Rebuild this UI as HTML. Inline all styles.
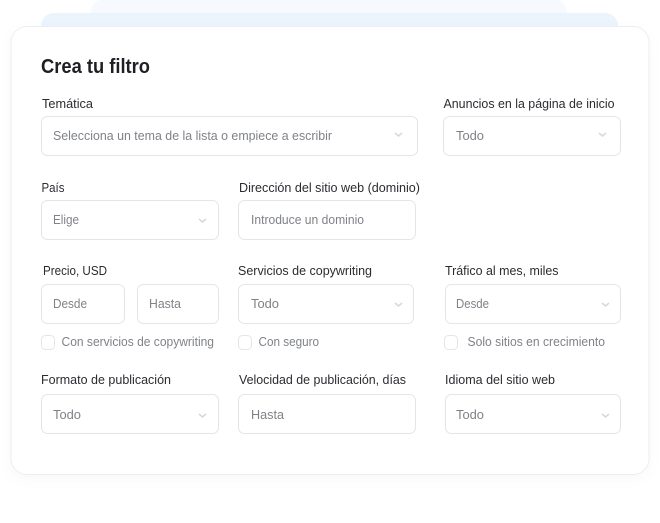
<!DOCTYPE html>
<html lang="es">
<head>
<meta charset="utf-8">
<title>Crea tu filtro</title>
<style>
html,body{margin:0;padding:0;width:660px;height:523px;overflow:hidden;background:#fff}
svg{display:block;font-family:"Liberation Sans",Arial,sans-serif;filter:blur(0.3px)}
.l{font-size:13px;fill:#2a2c30}
.v{font-size:13px;fill:#7f8287}
.b{fill:#fff;stroke:#e4e5e8;stroke-width:1}
.c{fill:none;stroke:#d6d8da;stroke-width:1.5}
</style>
</head>
<body>
<svg width="660" height="523" viewBox="0 0 660 523" xmlns="http://www.w3.org/2000/svg">
<defs>
<filter id="s" x="-5%" y="-5%" width="110%" height="112%">
<feDropShadow dx="0" dy="4" stdDeviation="5" flood-color="#8a9ab5" flood-opacity="0.07"/>
</filter>
</defs>
<rect x="91" y="-1" width="476" height="50" rx="13" fill="#f6faff"/>
<rect x="41" y="13" width="577" height="40" rx="13" fill="#ebf3fd"/>
<rect x="11" y="26.5" width="638" height="448" rx="16" fill="#fff" stroke="#eceef1" stroke-width="1" filter="url(#s)"/>

<text x="41" y="73" font-size="20" font-weight="700" fill="#1d1f23" textLength="109" lengthAdjust="spacingAndGlyphs">Crea tu filtro</text>

<!-- Row 1 -->
<text class="l" x="42" y="108" textLength="51" lengthAdjust="spacingAndGlyphs">Temática</text>
<rect class="b" x="41.5" y="116.5" width="376" height="39" rx="6"/>
<text class="v" x="53" y="140" textLength="279" lengthAdjust="spacingAndGlyphs">Selecciona un tema de la lista o empiece a escribir</text>
<path class="c" d="M395 133l3.500 3 3.500-3"/>

<text class="l" x="443.500" y="108" textLength="171" lengthAdjust="spacingAndGlyphs">Anuncios en la página de inicio</text>
<rect class="b" x="443.500" y="116.5" width="177" height="39" rx="6"/>
<text class="v" x="456" y="140" textLength="28" lengthAdjust="spacingAndGlyphs">Todo</text>
<path class="c" d="M599 133l3.500 3 3.500-3"/>

<!-- Row 2 -->
<text class="l" x="41.500" y="192" textLength="23" lengthAdjust="spacingAndGlyphs">País</text>
<rect class="b" x="41.500" y="200.5" width="177" height="39" rx="6"/>
<text class="v" x="53" y="224" textLength="26" lengthAdjust="spacingAndGlyphs">Elige</text>
<path class="c" d="M199 219l3.500 3 3.500-3"/>

<text class="l" x="239" y="192" textLength="181" lengthAdjust="spacingAndGlyphs">Dirección del sitio web (dominio)</text>
<rect class="b" x="238.500" y="200.5" width="177" height="39" rx="6"/>
<text class="v" x="251" y="224" textLength="113" lengthAdjust="spacingAndGlyphs">Introduce un dominio</text>

<!-- Row 3 -->
<text class="l" x="43" y="275" textLength="64" lengthAdjust="spacingAndGlyphs">Precio, USD</text>
<rect class="b" x="41.500" y="284.5" width="83" height="39" rx="6"/>
<text class="v" x="53" y="308" textLength="34" lengthAdjust="spacingAndGlyphs">Desde</text>
<rect class="b" x="137.500" y="284.5" width="81" height="39" rx="6"/>
<text class="v" x="149" y="308" textLength="32" lengthAdjust="spacingAndGlyphs">Hasta</text>

<text class="l" x="238" y="275" textLength="134" lengthAdjust="spacingAndGlyphs">Servicios de copywriting</text>
<rect class="b" x="238.500" y="284.5" width="175" height="39" rx="6"/>
<text class="v" x="251" y="308" textLength="28" lengthAdjust="spacingAndGlyphs">Todo</text>
<path class="c" d="M395 303l3.500 3 3.500-3"/>

<text class="l" x="445" y="275" textLength="113.500" lengthAdjust="spacingAndGlyphs">Tráfico al mes, miles</text>
<rect class="b" x="445.500" y="284.5" width="175" height="39" rx="6"/>
<text class="v" x="456" y="308" textLength="33" lengthAdjust="spacingAndGlyphs">Desde</text>
<path class="c" d="M602 303l3.500 3 3.500-3"/>

<!-- Checkboxes -->
<rect class="b" x="41.500" y="335.500" width="13" height="14" rx="4"/>
<text class="v" x="61.500" y="346" textLength="152.500" lengthAdjust="spacingAndGlyphs">Con servicios de copywriting</text>
<rect class="b" x="238.500" y="335.500" width="13" height="14" rx="4"/>
<text class="v" x="258.500" y="346" textLength="60.500" lengthAdjust="spacingAndGlyphs">Con seguro</text>
<rect class="b" x="444.500" y="335.500" width="13" height="14" rx="4"/>
<text class="v" x="467.500" y="346" textLength="137.500" lengthAdjust="spacingAndGlyphs">Solo sitios en crecimiento</text>

<!-- Row 4 -->
<text class="l" x="41" y="384" textLength="130" lengthAdjust="spacingAndGlyphs">Formato de publicación</text>
<rect class="b" x="41.500" y="394.500" width="177" height="39" rx="6"/>
<text class="v" x="53" y="419" textLength="28" lengthAdjust="spacingAndGlyphs">Todo</text>
<path class="c" d="M199 414l3.500 3 3.500-3"/>

<text class="l" x="239" y="384" textLength="167" lengthAdjust="spacingAndGlyphs">Velocidad de publicación, días</text>
<rect class="b" x="238.500" y="394.500" width="177" height="39" rx="6"/>
<text class="v" x="251" y="419" textLength="33" lengthAdjust="spacingAndGlyphs">Hasta</text>

<text class="l" x="445" y="384" textLength="110" lengthAdjust="spacingAndGlyphs">Idioma del sitio web</text>
<rect class="b" x="445.500" y="394.500" width="175" height="39" rx="6"/>
<text class="v" x="456" y="419" textLength="28" lengthAdjust="spacingAndGlyphs">Todo</text>
<path class="c" d="M602 414l3.500 3 3.500-3"/>
</svg>
</body>
</html>
